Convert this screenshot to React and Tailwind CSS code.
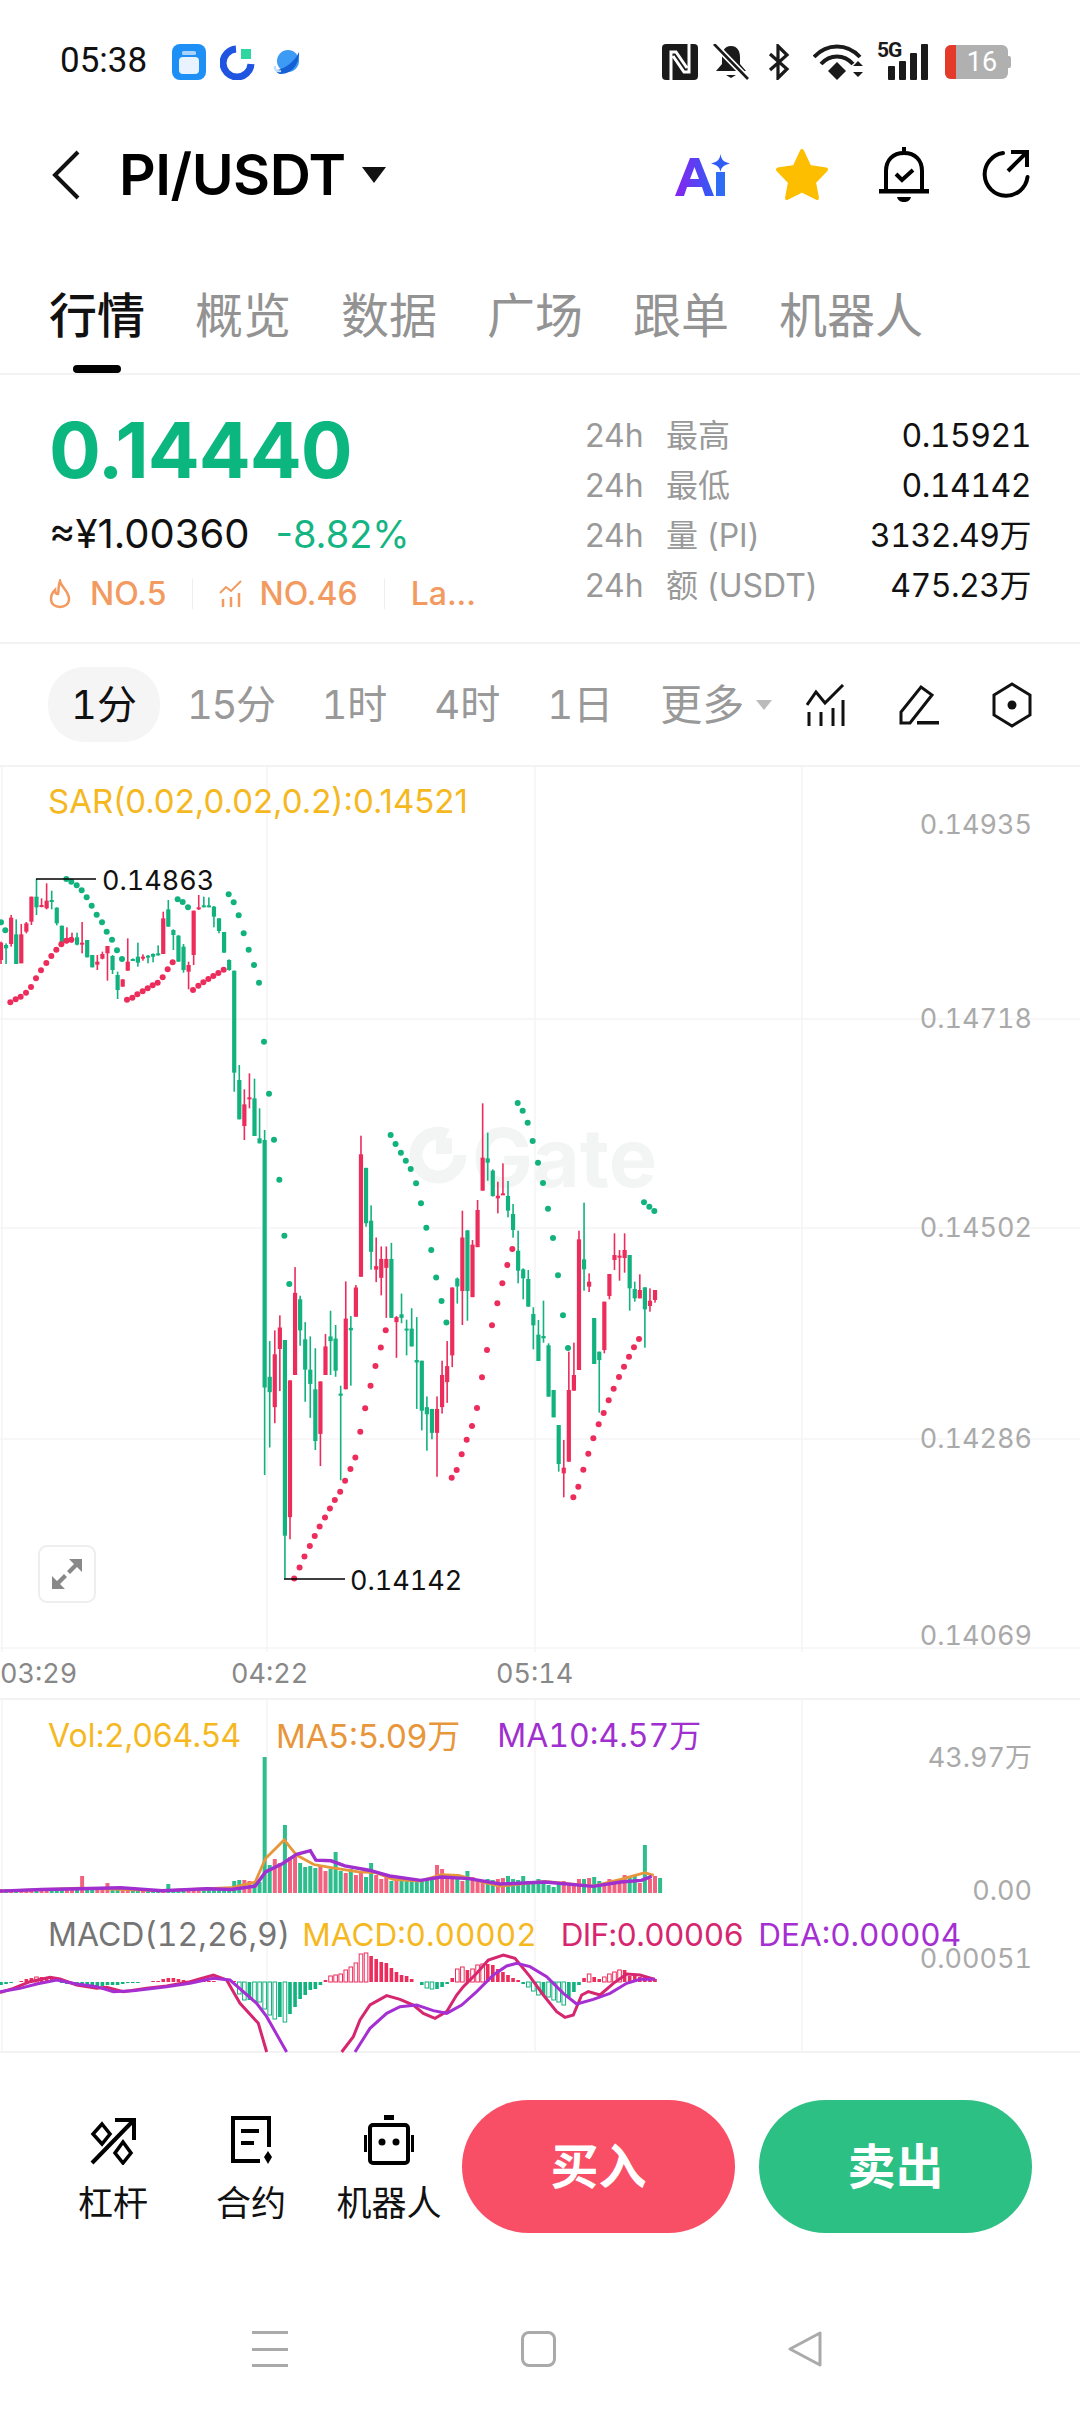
import React from 'react'

const GREEN = '#12b27f'
const RED = '#ec2d5c'

// candles: colour, wick top, wick bottom, body top, body bottom (read off the crops)
const part1 = [
  ['r',365,432,368,420],['g',370,432,375,385],['r',285,380,293,372],['g',298,432,343,432],['r',312,430,343,430],
  ['r',306,340,310,335],['r',230,315,230,305],['g',177,285,230,262],['r',235,262,255,260],['r',190,268,242,265],
  ['g',212,268,240,246],['g',262,316,263,310],['g',317,380,317,368],['r',322,370,355,368],['r',338,368,355,362],
  ['g',338,376,352,374],['r',306,400,368,372],['g',360,412,360,412],['g',405,442,405,442],['r',405,450,425,434],
  ['r',395,418,402,416],['r',378,482,378,400],['g',405,462,408,450],['g',455,537,465,510],['r',478,500,478,500],
  ['r',355,452,425,452],['g',415,422,417,420],['g',368,440,410,428],['r',403,422,410,416],['g',405,430,407,411],
  ['g',400,427,402,410],['g',376,407,400,405],['r',275,402,295,402],['g',240,320,268,320],['g',328,390,330,345],
  ['g',345,425,347,425],['g',372,458,380,450],['r',425,508,435,455],['r',272,435,272,405],['r',225,270,262,268],
  ['g',230,262,256,260],['g',232,262,256,260],['g',258,322,260,290],['g',295,340,295,333],['g',336,398,336,398],
  ['g',418,452,420,450],['g',452,815,452,758],['g',735,898,780,898],['r',808,960,853,918],['r',760,865,832,837],
  ['g',776,948,835,948],['g',865,970,955,970],
]
const part2 = [
  ['g',84,1050,112,805],['g',675,973,775,818],['r',645,905,712,860],['r',603,815,637,697],['g',672,1340,672,1220],
  ['r',785,1230,785,1168],['r',468,770,540,770],['g',548,688,558,645],['g',622,845,670,755],['g',662,890,755,795],
  ['g',695,980,810,955],['r',788,1025,788,935],['r',655,770,690,770],['g',590,770,662,675],['g',630,775,668,758],
  ['g',800,1065,822,828],['r',508,810,612,810],['g',605,800,638,645],['r',518,607,525,607],['r',100,495,152,495],
  ['g',190,355,190,345],['g',295,475,338,425],['r',385,510,465,475],['r',410,547,445,498],['r',410,610,445,470],
  ['g',400,610,445,610],['r',605,722,608,622],['g',542,625,600,610],['g',615,715,640,645],['g',583,690,640,690],
  ['g',608,865,728,735],['g',730,925,730,870],['g',830,982,860,880],['g',865,950,865,932],['r',830,1055,865,932],
  ['r',730,878,770,860],['r',675,848,745,790],['r',525,748,525,715],['g',497,570,500,522],['r',310,630,385,535],
  ['g',365,618,365,535],['r',392,552,405,552],['r',280,412,308,412],
]
const part3 = [
  ['r',70,332,233,332],['g',158,302,235,248],['g',268,350,272,348],['r',305,400,347,355],['r',250,345,340,346],
  ['g',303,412,348,392],['g',372,473,402,450],['g',452,610,512,572],['g',565,658,568,595],['g',570,680,597,680],
  ['g',682,808,702,736],['g',720,843,764,843],['g',662,788,768,775],['g',790,950,796,950],['g',930,1012,930,1012],
  ['g',1035,1175,1035,1152],['r',1080,1252,1163,1180],['r',815,1145,930,1145],['r',788,932,885,932],['r',452,870,478,870],
  ['g',368,632,538,568],['r',580,636,605,620],['g',714,852,714,852],['g',815,998,815,840],['r',665,820,665,810],
  ['r',582,658,582,648],['r',460,570,525,540],['r',510,602,527,533],['r',460,578,510,534],['g',525,692,525,625],
  ['g',605,665,627,655],['r',583,655,630,655],['g',622,803,622,688],['r',625,695,662,678],['r',630,668,630,660],
]
const fit = (base, k) => (c) => [c[0], base + c[1] / k, base + c[2] / k, base + c[3] / k, base + c[4] / k]
const candles = [...part1.map(fit(820, 3)), ...part2.map(fit(1100, 2.8)), ...part3.map(fit(1080, 3))]
const cx = (i) => 1 + 5.07 * i

const z3 = (p) => p.map(([x, y]) => [x / 3, 820 + y / 3])
const z4 = (p) => p.map(([x, y]) => [x / 2.24, 1100 + y / 2.8])
const z5 = (p) => p.map(([x, y]) => [330 + x / 3, 1080 + y / 3])

const greenDots = [
  ...z3([[3,307],[16,331],[199,177],[214,185],[230,196],[245,211],[260,232],[275,257],[290,284],[306,307],[320,335],[336,359],[351,391],[366,417],[533,238],[548,246],[564,262],[686,223],[701,247],[716,286],[731,340],[746,389],[762,435],[777,488],[792,665],[807,821],[822,959],[838,1079]]),
  ...z4([[637,380],[648,515],[875,98],[886,123],[898,148],[909,170],[920,193],[932,233],[943,289],[955,358],[966,420],[977,497],[989,563],[1000,623]]),
  ...z5([[563,69],[578,92],[593,128],[608,183],[624,248],[639,309],[654,386],[669,474],[684,586],[699,706],[714,804],[942,367],[958,380],[973,393]]),
]
const redDots = [
  ...z3([[31,547],[47,538],[62,530],[78,518],[93,501],[108,475],[123,451],[139,429],[154,408],[169,389],[184,373],[199,362],[214,359],[381,539],[397,533],[412,523],[428,514],[443,505],[458,496],[473,488],[488,472],[503,448],[518,427],[579,510],[595,497],[610,487],[625,477],[640,468],[655,459],[671,449]]),
  ...z4([[659,1340],[671,1309],[682,1278],[694,1249],[705,1221],[716,1194],[728,1169],[739,1144],[750,1120],[762,1097],[773,1066],[785,1033],[796,1001],[807,929],[818,863],[830,800],[841,745],[853,693],[864,645]]),
  ...z5([[365,1193],[380,1170],[395,1123],[410,1079],[426,1038],[441,984],[456,892],[471,810],[486,736],[502,670],[517,610],[532,555],[547,507],[730,1252],[745,1220],[760,1169],[775,1121],[790,1075],[806,1033],[821,999],[836,961],[851,926],[867,891],[882,860],[897,830],[912,802],[927,777]]),
]

const volumes = [
  4,4,4,3,4,4,4,5,4,4,4,4,5,5,4,4,17,5,4,5,5,10,4,4,3,3,3,3,4,4,4,4,3,9,3,4,4,4,4,3,4,4,4,3,4,5,12,13,13,12,10,11,
  136,28,34,30,68,36,36,30,26,27,25,28,22,24,41,22,20,24,18,22,16,30,18,14,18,12,14,14,15,14,14,14,15,15,28,24,18,16,14,12,22,16,12,10,14,13,14,15,17,14,13,17,
  12,10,14,10,8,6,10,12,8,10,14,14,15,16,12,10,14,10,14,18,16,18,10,48,14,17,15,
]

const macdBars = [
  -3,-2,-1,0,1,3,4,5,5,5,4,0,-1,-2,-2,-3,-3,-3,-3,-4,-4,-3,-3,-3,-2,-1,-1,-1,0,0,1,1,3,4,4,3,2,0,1,1,1,1,1,0,0,0,1,
  -12,-18,-18,-19,-20,-27,-33,-37,-35,-40,-32,-25,-17,-13,-8,-7,-3,
  2,6,7,8,12,15,19,28,29,26,23,20,19,14,10,7,6,3,0,-3,-6,-7,-7,-5,-2,
  4,13,15,12,13,17,18,18,17,13,10,7,4,2,-2,-5,-9,-13,-13,-15,-18,-20,-23,-15,-10,-3,
  4,8,5,3,5,8,10,12,12,6,6,5,5,4,3,
]

const vol = (p) => p.map(([x, y]) => `${x / 1.45},${1680 + y / 2.97}`).join(' ')
const ma5 = vol([[0,627],[115,618],[175,622],[235,626],[300,620],[335,617],[370,600],[385,530],[412,475],[430,520],[455,548],[480,557],[520,570],[545,572],[570,592],[610,597],[640,578],[665,580],[700,600],[725,612],[790,598],[860,612],[900,592],[935,572],[948,580]])
const ma10 = vol([[0,627],[60,622],[115,620],[175,617],[235,626],[300,620],[335,622],[370,612],[385,570],[410,545],[430,518],[450,507],[458,535],[480,537],[500,552],[535,565],[565,582],[610,595],[640,585],[680,590],[725,606],[790,600],[860,613],[900,600],[930,595],[945,583]])

const m9 = (p) => p.map(([x, y]) => `${x / 3},${1880 + y / 3}`).join(' ')
const m10 = (p) => p.map(([x, y]) => `${400 + x / 3},${1880 + y / 3}`).join(' ')
const dif = [
  m9([[0,338],[40,325],[90,305],[150,292],[180,297],[230,315],[290,325],[320,322],[370,335],[440,325],[500,318],[570,305],[640,285],[680,300],[700,335],[720,370],[775,430],[800,516]]),
  m9([[1025,516],[1060,470],[1080,420],[1110,375],[1160,347],[1200,358]]) + ' ' + m10([[40,375],[70,400],[105,415],[140,395],[170,345],[190,320],[230,280],[265,240],[310,225],[345,235],[390,290],[430,345],[470,395],[495,412],[520,405],[545,345],[565,335],[600,345],[640,310],[680,282],[720,285],[765,298]]),
]
const dea = [
  m9([[0,335],[60,325],[110,312],[170,300],[230,312],[290,320],[340,335],[400,332],[500,320],[570,310],[640,295],[690,300],[770,370],[800,410],[860,516]]),
  m9([[1065,516],[1110,445],[1160,400],[1200,380]]) + ' ' + m10([[50,375],[100,392],[140,400],[185,375],[230,335],[280,285],[320,258],[350,250],[390,260],[440,290],[490,340],[530,372],[580,358],[630,340],[680,310],[720,298],[765,298]]),
]

const GridLines = ({ top, bottom }) => (
  <g stroke="#f4f4f4" strokeWidth="1.5">
    {[2, 267, 535, 802].map((x) => (
      <line key={x} x1={x} x2={x} y1={top} y2={bottom} />
    ))}
  </g>
)

const AppIcons = () => (
  <div className="flex items-center ml-[25px]">
    <svg viewBox="0 0 34 36" className="w-[34px] h-[36px]">
      <rect width="34" height="36" rx="8" fill="#1e8ff5" />
      <rect x="7" y="13" width="20" height="17" rx="4" fill="#e8f3ff" />
      <rect x="10" y="7" width="14" height="4" rx="1.5" fill="#a9d3fb" />
    </svg>
    <svg viewBox="0 0 36 36" className="w-[36px] h-[36px] ml-[14px]">
      <path d="M16 5A14 14 0 1 0 31 20" fill="none" stroke="#1f55e0" strokeWidth="7" />
      <rect x="21" y="5" width="10" height="10" fill="#2fd6a0" />
    </svg>
    <svg viewBox="0 0 28 28" className="w-[28px] h-[28px] ml-[17px]">
      <circle cx="15" cy="13" r="11" fill="#3d9bf5" />
      <path d="M3 22C10 22 22 14 26 4C27 14 20 26 8 26C5 26 3 24 3 22Z" fill="#1560d4" />
      <path d="M2 18C1 22 4 24 8 23" fill="none" stroke="#bfe0fb" strokeWidth="2" />
    </svg>
  </div>
)

const StatusIcons = () => (
  <div className="flex items-center">
    <svg viewBox="0 0 36 36" className="w-[36px] h-[36px]">
      <rect width="36" height="36" rx="4" fill="#1a1a1a" />
      <path d="M9 36V8H14L25 24M27 0V28H22L11 12" fill="none" stroke="#fff" strokeWidth="3" />
    </svg>
    <svg viewBox="0 0 36 36" className="w-[36px] h-[36px] ml-[15px]">
      <path d="M18 2C11 2 9 8 9 13V20L3 27H33L27 20V13C27 8 25 2 18 2Z" fill="#1a1a1a" />
      <path d="M13 31H23L18 34Z" fill="#1a1a1a" />
      <path d="M1 0L35 35" stroke="#fff" strokeWidth="6" />
      <path d="M1 0L35 35" stroke="#1a1a1a" strokeWidth="2.6" />
    </svg>
    <svg viewBox="0 0 22 36" className="w-[22px] h-[36px] ml-[19px]">
      <path d="M2 10L19 25L10 34V2L19 11L2 26" fill="none" stroke="#1a1a1a" strokeWidth="3.2" />
    </svg>
    <svg viewBox="0 0 50 36" className="w-[50px] h-[36px] ml-[23px]">
      <path d="M1 13C14 -1 34 -1 47 13" fill="none" stroke="#1a1a1a" strokeWidth="4" />
      <path d="M8 20C17 10 31 10 40 20" fill="none" stroke="#1a1a1a" strokeWidth="4" />
      <path d="M15 27L24 18L33 27L24 36Z" fill="#1a1a1a" />
      <path d="M40 22L45 17L50 22ZM40 28L45 33L50 28Z" fill="#1a1a1a" />
    </svg>
    <div className="relative w-[51px] h-[37px] ml-[14px] flex items-end justify-end gap-[4px]">
      <span className="absolute left-0 top-[-3px] text-[21px] leading-[20px] font-bold text-[#1a1a1a] tracking-[-1px] font-['Roboto',sans-serif]">5G</span>
      <span className="w-[7px] h-[14px] rounded-[1px] bg-[#1a1a1a]" />
      <span className="w-[7px] h-[19px] rounded-[1px] bg-[#1a1a1a]" />
      <span className="w-[7px] h-[27px] rounded-[1px] bg-[#1a1a1a]" />
      <span className="w-[7px] h-[36px] rounded-[1px] bg-[#1a1a1a]" />
    </div>
    <div className="flex items-center ml-[17px]">
      <div className="flex w-[63px] h-[34px] rounded-[6px] overflow-hidden bg-[#b0b0b0]">
        <span className="w-[11px] bg-[#e43a2a]" />
        <span className="flex-1 text-center text-[27px] leading-[34px] text-white font-['Roboto',sans-serif]">16</span>
      </div>
      <span className="w-[3px] h-[12px] rounded-r-[2px] bg-[#b0b0b0]" />
    </div>
  </div>
)

const AiIcon = () => (
  <svg viewBox="0 0 56 44" className="w-[56px] h-[44px]">
    <defs>
      <linearGradient id="aiGrad" x1="0" x2="1" y1="0" y2="0">
        <stop offset="0" stopColor="#8a22f0" />
        <stop offset="1" stopColor="#2f5cf5" />
      </linearGradient>
    </defs>
    <path d="M0 43L15 5H24L39 43H30L27 34H12L9 43ZM15 26H24L19.5 14Z" fill="url(#aiGrad)" />
    <rect x="41" y="19" width="9" height="24" fill="#2f6cf5" />
    <path d="M45.5 1C46.5 7 48 8.500 55 10.500C48 12.500 46.500 14 45.500 19C44.500 14 43 12.500 36 10.500C43 8.500 44.500 7 45.500 1Z" fill="#2f5cf5" />
  </svg>
)

const BellCheck = () => (
  <svg viewBox="0 0 50 56" className="w-[50px] h-[56px]">
    <path d="M7 42V24C7 13 14 6 25 6C36 6 43 13 43 24V42" fill="none" stroke="#000" strokeWidth="4" />
    <rect x="0" y="42" width="50" height="4.500" fill="#000" />
    <rect x="23" y="0" width="4" height="6" fill="#000" />
    <path d="M18 50H32C31 54 28 55 25 55C22 55 19 54 18 50Z" fill="#000" />
    <path d="M17 27L23 33L34 23" fill="none" stroke="#000" strokeWidth="4" />
  </svg>
)

const ShareIcon = () => (
  <svg viewBox="0 0 50 50" className="w-[50px] h-[50px]">
    <path d="M23 3A21.500 21.500 0 1 0 47.500 27" fill="none" stroke="#000" strokeWidth="4" strokeLinecap="round" />
    <path d="M28 21L46 3M31 2H47V17" fill="none" stroke="#000" strokeWidth="4" />
  </svg>
)

const Flame = () => (
  <svg viewBox="0 0 22 30" className="w-[22px] h-[30px]">
    <path d="M11 2C12 8 20 12 20 20C20 25 16 28 11 28C6 28 2 25 2 20C2 16 4 13 6 11C6 14 7 15 9 15C10 11 9 6 11 2Z" fill="none" stroke="#f29a5f" strokeWidth="2.500" />
  </svg>
)

const TrendTag = () => (
  <svg viewBox="0 0 24 30" className="w-[24px] h-[30px]">
    <path d="M1 14L7 8L12 12L22 2" fill="none" stroke="#f29a5f" strokeWidth="2" />
    <path d="M4 20V28M12 18V28M20 14V28" stroke="#f29a5f" strokeWidth="2.500" />
  </svg>
)

const Stat = ({ name, value }) => (
  <div className="flex items-center justify-between h-[50px]">
    <span className="flex items-center text-[32px] text-[#999]">
      <span className="w-[81px]">24h</span>
      {name}
    </span>
    <span className="text-[32px] text-[#111] tabular-nums tracking-[-0.5px]">{value}</span>
  </div>
)

const ChartTypeIcon = () => (
  <svg viewBox="0 0 40 42" className="w-[40px] h-[42px]">
    <path d="M1 21L10 8L19 19L37 1" fill="none" stroke="#111" strokeWidth="3" />
    <path d="M3 28V42M15 28V42M27 24V42M37 16V42" stroke="#111" strokeWidth="3" />
  </svg>
)

const PenIcon = () => (
  <svg viewBox="0 0 40 42" className="w-[40px] h-[42px]">
    <path d="M2 39V28L22 3L33 11L11 39Z" fill="none" stroke="#111" strokeWidth="3" />
    <rect x="18" y="37" width="22" height="3.500" fill="#111" />
  </svg>
)

const HexIcon = () => (
  <svg viewBox="0 0 40 46" className="w-[40px] h-[46px]">
    <path d="M20 2L38 13V33L20 44L2 33V13Z" fill="none" stroke="#111" strokeWidth="3" />
    <circle cx="20" cy="23" r="4.500" fill="#111" />
  </svg>
)

const LeverIcon = () => (
  <svg viewBox="0 0 50 50" className="w-[50px] h-[50px]">
    <path d="M4 48L44 7" stroke="#000" strokeWidth="4" fill="none" />
    <path d="M27 5H46V25" stroke="#000" strokeWidth="4" fill="none" />
    <path d="M14 9L22 19L14 29L5 19Z" stroke="#000" strokeWidth="3.500" fill="none" />
    <path d="M35 27L43 38L35 48L27 38Z" stroke="#000" strokeWidth="3.500" fill="none" />
  </svg>
)

const ContractIcon = () => (
  <svg viewBox="0 0 50 50" className="w-[50px] h-[50px]">
    <path d="M43 32V3H7V46H34" stroke="#000" strokeWidth="4" fill="none" />
    <path d="M15 16H33M15 28H28" stroke="#000" strokeWidth="4" fill="none" />
    <path d="M42 36L46 42L42 49L38 42Z" fill="#000" />
  </svg>
)

const RobotIcon = () => (
  <svg viewBox="0 0 50 50" className="w-[50px] h-[50px]">
    <rect x="6" y="10" width="38" height="38" rx="3" stroke="#000" strokeWidth="4" fill="none" />
    <rect x="20" y="0" width="10" height="5" fill="#000" />
    <rect x="0" y="20" width="3" height="17" fill="#000" />
    <rect x="47" y="20" width="3" height="17" fill="#000" />
    <circle cx="18" cy="27" r="3.500" fill="#000" />
    <circle cx="32" cy="27" r="3.500" fill="#000" />
  </svg>
)

const MainChart = () => (
  <svg viewBox="0 767 1080 933" className="absolute inset-0 w-[1080px] h-[933px] tabular-nums">
    <g stroke="#f4f4f4" strokeWidth="1.500">
      {[1019, 1228, 1439, 1648].map((y) => (
        <line key={y} x1="0" x2="1080" y1={y} y2={y} />
      ))}
    </g>
    <GridLines top={767} bottom={1652} />
    {/* watermark */}
    <path d="M447 1135A22 22 0 1 0 460 1155" fill="none" stroke="#f3f5f5" strokeWidth="13" />
    <rect x="436" y="1138" width="16" height="16" fill="#f3f5f5" />
    <text x="472" y="1187" fontSize="81" fontWeight="700" fill="#f3f5f5" fontFamily="Inter, sans-serif">Gate</text>
    {candles.map((c, i) => {
      const color = c[0] === 'g' ? GREEN : RED
      return (
        <g key={i} fill={color}>
          <rect x={cx(i) - 0.8} y={c[1]} width="1.600" height={c[2] - c[1]} />
          <rect x={cx(i) - 2.100} y={c[3]} width="4.200" height={Math.max(c[4] - c[3], 2)} />
        </g>
      )
    })}
    {greenDots.map(([x, y], i) => (
      <circle key={i} cx={x} cy={y} r="3" fill={GREEN} />
    ))}
    {redDots.map(([x, y], i) => (
      <circle key={i} cx={x} cy={y} r="3" fill={RED} />
    ))}
    <path d="M36 879H96M284 1579H345" stroke="#000" strokeWidth="1.600" fill="none" />
    <g fontSize="27" fill="#111" fontFamily="Inter, sans-serif">
      <text x="102" y="890">0.14863</text>
      <text x="350" y="1590">0.14142</text>
    </g>
    <g fontSize="27" fill="#aaa" textAnchor="end" fontFamily="Inter, sans-serif">
      <text x="1032" y="834">0.14935</text>
      <text x="1032" y="1028">0.14718</text>
      <text x="1032" y="1237">0.14502</text>
      <text x="1032" y="1448">0.14286</text>
      <text x="1032" y="1645">0.14069</text>
    </g>
    <g fontSize="27" fill="#888" fontFamily="Inter, sans-serif">
      <text x="0" y="1683">03:29</text>
      <text x="231" y="1683">04:22</text>
      <text x="496" y="1683">05:14</text>
    </g>
  </svg>
)

const VolChart = () => (
  <svg viewBox="0 1700 1080 205" className="absolute inset-0 w-[1080px] h-[205px] tabular-nums overflow-visible">
    <GridLines top={1700} bottom={1905} />
    {volumes.map((h, i) => (
      <rect key={i} x={cx(i) - 2} y={1893 - h} width="4" height={h} fill={candles[i] && candles[i][0] === 'r' ? '#f2637f' : '#2fbd8d'} />
    ))}
    <polyline points={ma5} fill="none" stroke="#e8963a" strokeWidth="2.800" />
    <polyline points={ma10} fill="none" stroke="#a02fd0" strokeWidth="3.400" />
    <g fontSize="27" fill="#aaa" textAnchor="end" fontFamily="Inter, 'Noto Sans CJK SC', sans-serif">
      <text x="1032" y="1767">43.97万</text>
      <text x="1032" y="1900">0.00</text>
    </g>
  </svg>
)

const MacdChart = () => (
  <svg viewBox="0 1905 1080 148" className="absolute inset-0 w-[1080px] h-[148px] tabular-nums">
    <GridLines top={1905} bottom={2053} />
    {macdBars.map((v, i) => {
      if (v === 0) return null
      const color = v > 0 ? RED : GREEN
      const prev = i > 0 ? macdBars[i - 1] : 0
      const hollow = Math.abs(v) > Math.abs(prev) && Math.abs(v) > 4
      return (
        <rect
          key={i}
          x={cx(i) - 1.800}
          y={v > 0 ? 1982 - v : 1982}
          width="3.600"
          height={Math.abs(v)}
          fill={hollow ? '#fff' : color}
          stroke={hollow ? color : 'none'}
          strokeWidth="1"
        />
      )
    })}
    {dif.map((p) => (
      <polyline key={p} points={p} fill="none" stroke="#d6266f" strokeWidth="3" />
    ))}
    {dea.map((p) => (
      <polyline key={p} points={p} fill="none" stroke="#a52fd2" strokeWidth="3" />
    ))}
    <text x="1032" y="1968" fontSize="27" fill="#aaa" textAnchor="end" fontFamily="Inter, sans-serif">0.00051</text>
  </svg>
)

const Tab = ({ label, active }) => (
  <div className="flex flex-col items-center w-[96px]">
    <span className={active ? 'text-[48px] leading-[56px] font-medium text-[#111]' : 'text-[48px] leading-[56px] text-[#939393]'}>{label}</span>
    {active && <span className="mt-[21px] w-[48px] h-[8px] rounded-[4px] bg-black" />}
  </div>
)

const SideAction = ({ icon, label }) => (
  <div className="flex flex-col items-center w-[138px] pt-[15px]">
    {icon}
    <span className="mt-[18px] text-[35px] leading-[40px] text-[#111]">{label}</span>
  </div>
)

export default function App() {
  return (
    <div className="w-[1080px] h-[2412px] bg-white overflow-hidden font-['Inter','Noto_Sans_CJK_SC',sans-serif]">
      {/* status bar */}
      <div className="h-[120px] flex items-center justify-between pl-[60px] pr-[69px] pt-[3px]">
        <div className="flex items-center">
          <span className="text-[35px] text-[#111] font-['Roboto',sans-serif]">05:38</span>
          <AppIcons />
        </div>
        <StatusIcons />
      </div>

      {/* title */}
      <div className="h-[110px] flex items-center pl-[52px] pr-[50px]">
        <svg viewBox="0 0 28 50" className="w-[28px] h-[50px]">
          <path d="M26 2L3 25L26 48" fill="none" stroke="#111" strokeWidth="4" />
        </svg>
        <span className="ml-[39px] text-[57px] font-semibold text-black tracking-[-0.5px]">PI/USDT</span>
        <svg viewBox="0 0 24 16" className="w-[24px] h-[16px] ml-[16px]">
          <path d="M0 0H24L12 16Z" fill="#111" />
        </svg>
        <div className="ml-auto flex items-center">
          <AiIcon />
          <svg viewBox="0 0 56 54" className="w-[56px] h-[54px] ml-[43px]">
            <path d="M28 3L35.500 19L52 21.500L40 34L43 50L28 42.500L13 50L16 34L4 21.500L20.500 19Z" fill="#fdbe00" stroke="#fdbe00" strokeWidth="4" strokeLinejoin="round" />
          </svg>
          <div className="ml-[49px]"><BellCheck /></div>
          <div className="ml-[51px]"><ShareIcon /></div>
        </div>
      </div>

      {/* tabs */}
      <div className="h-[145px] box-border border-b-2 border-[#f3f3f3] flex items-start gap-[50px] pl-[49px] pt-[58px]">
        <Tab label="行情" active />
        <Tab label="概览" />
        <Tab label="数据" />
        <Tab label="广场" />
        <Tab label="跟单" />
        <span className="text-[48px] leading-[56px] text-[#939393]">机器人</span>
      </div>

      {/* price block */}
      <div className="h-[269px] box-border border-b-2 border-[#f3f3f3] flex justify-between pl-[49px] pr-[49px]">
        <div className="pt-[33px]">
          <div className="text-[77px] leading-[84px] font-bold text-[#0cb67f] tracking-[-1px]">0.14440</div>
          <div className="mt-[19px] flex items-center leading-[46px]">
            <span className="text-[40px] text-[#111]">≈¥1.00360</span>
            <span className="ml-[26px] text-[38px] text-[#14b583]">-8.82%</span>
          </div>
          <div className="mt-[17px] flex items-center h-[40px] text-[32px] font-medium text-[#f29a5f]">
            <Flame />
            <span className="ml-[19px]">NO.5</span>
            <span className="mx-[26px] w-[1px] h-[30px] bg-[#eee]" />
            <TrendTag />
            <span className="ml-[16px]">NO.46</span>
            <span className="mx-[26px] w-[1px] h-[30px] bg-[#eee]" />
            <span>La...</span>
          </div>
        </div>
        <div className="w-[446px] pt-[36px]">
          <Stat name="最高" value="0.15921" />
          <Stat name="最低" value="0.14142" />
          <Stat name="量 (PI)" value="3132.49万" />
          <Stat name="额 (USDT)" value="475.23万" />
        </div>
      </div>

      {/* intervals */}
      <div className="h-[123px] box-border border-b-2 border-[#f3f3f3] flex items-center pl-[48px] pr-[48px] text-[40px] text-[#999] tabular-nums">
        <span className="w-[112px] h-[75px] rounded-[36px] bg-[#f5f5f5] flex items-center justify-center text-[#111]">1分</span>
        <div className="ml-[27px] flex items-center gap-[47px]">
          <span className="tracking-[-1.5px]">15分</span>
          <span>1时</span>
          <span>4时</span>
          <span>1日</span>
          <span className="text-[42px]">更多</span>
        </div>
        <svg viewBox="0 0 16 10" className="w-[16px] h-[10px] ml-[12px]">
          <path d="M0 0H16L8 10Z" fill="#bbb" />
        </svg>
        <div className="ml-auto flex items-center gap-[53px]">
          <ChartTypeIcon />
          <PenIcon />
          <HexIcon />
        </div>
      </div>

      {/* main chart */}
      <div className="relative h-[933px] box-border border-b-2 border-[#f3f3f3]">
        <MainChart />
        <div className="relative pl-[48px] pt-[14px] text-[33px] leading-[40px] text-[#f5b81f]">SAR(0.02,0.02,0.2):0.14521</div>
        <div className="absolute left-[38px] top-[778px] w-[58px] h-[58px] box-border rounded-[9px] border-2 border-[#eeeeee] bg-white flex items-center justify-center">
          <svg viewBox="0 0 30 30" className="w-[30px] h-[30px]">
            <path d="M30 0V13L25 8L18 15L15 12L22 5L17 0ZM0 30V17L5 22L12 15L15 18L8 25L13 30Z" fill="#888" />
          </svg>
        </div>
      </div>

      {/* volume */}
      <div className="relative h-[205px]">
        <VolChart />
        <div className="relative flex items-center pl-[48px] pt-[16px] leading-[40px]">
          <span className="text-[32px] text-[#f5b81f]">Vol:2,064.54</span>
          <span className="ml-[35px] text-[33px] text-[#e8963a]">MA5:5.09万</span>
          <span className="ml-[37px] text-[32px] text-[#a02fd0] tabular-nums">MA10:4.57万</span>
        </div>
      </div>

      {/* macd */}
      <div className="relative h-[148px] box-border border-b-2 border-[#f3f3f3]">
        <MacdChart />
        <div className="relative flex items-center pl-[48px] pt-[10px] text-[31.5px] leading-[40px] tabular-nums">
          <span className="text-[32px] text-[#757575]">MACD(12,26,9)</span>
          <span className="ml-[12px] text-[#f5b81f]">MACD:0.00002</span>
          <span className="ml-[24px] text-[#d6266f] tracking-[-0.6px]">DIF:0.00006</span>
          <span className="ml-[15px] text-[#a52fd2]">DEA:0.00004</span>
        </div>
      </div>

      {/* order bar */}
      <div className="flex pl-[44px] pt-[47px]">
        <SideAction icon={<LeverIcon />} label="杠杆" />
        <SideAction icon={<ContractIcon />} label="合约" />
        <SideAction icon={<RobotIcon />} label="机器人" />
        <button className="ml-[4px] w-[273px] h-[133px] rounded-full bg-[#f94f66] text-white text-[48px] font-bold">买入</button>
        <button className="ml-[24px] w-[273px] h-[133px] rounded-full bg-[#2dc085] text-white text-[48px] font-bold">卖出</button>
      </div>

      {/* nav bar */}
      <div className="mt-[98px] flex items-center pl-[252px]">
        <div className="w-[36px] h-[36px] flex flex-col justify-between">
          <span className="h-[3px] bg-[#aaa]" />
          <span className="h-[3px] bg-[#aaa]" />
          <span className="h-[3px] bg-[#aaa]" />
        </div>
        <div className="ml-[233px] w-[35px] h-[36px] box-border rounded-[8px] border-[3px] border-[#aaa]" />
        <svg viewBox="0 0 34 36" className="w-[34px] h-[36px] ml-[232px]">
          <path d="M32 2V34L2 18Z" fill="none" stroke="#aaa" strokeWidth="3" strokeLinejoin="round" />
        </svg>
      </div>
    </div>
  )
}
